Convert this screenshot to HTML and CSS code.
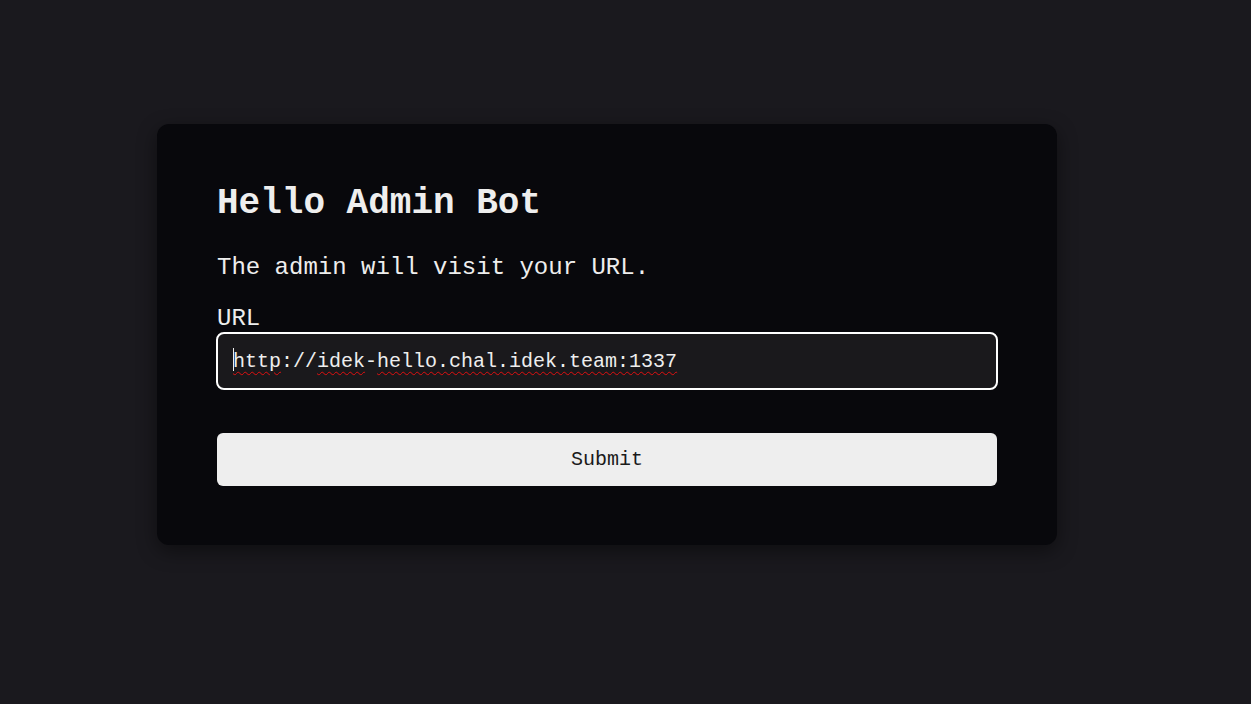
FILE: index.html
```html
<!DOCTYPE html>
<html>
<head>
<meta charset="utf-8">
<link rel="stylesheet" href="styles.css">
</head>
<body>
<main class="card">
  <h1 class="title">Hello Admin Bot</h1>
  <p class="lead">The admin will visit your URL.</p>
  <label class="label">URL</label>
  <div class="field"><span class="caret"></span><span class="sp">http</span>://<span class="sp">idek</span>-<span class="sp">hello.chal.idek.team:1337</span></div>
  <button class="submit">Submit</button>
</main>
</body>
</html>
```
FILE: styles.css
```css
html, body {
  margin: 0;
  height: 100%;
}
body {
  background: #1a191e;
  font-family: "Liberation Mono", monospace;
  color: #eeeeee;
  padding: 124px 0 0 157px;
  box-sizing: border-box;
}
.card {
  width: 900px;
  box-sizing: border-box;
  padding: 60px 60px 59px;
  background: #08080c;
  border-radius: 12px;
  box-shadow: 0 6px 20px rgba(0, 0, 0, 0.45);
  display: flex;
  flex-direction: column;
}
.title {
  margin: 0 0 30px;
  font-size: 36px;
  font-weight: bold;
  line-height: 40px;
}
.lead {
  margin: 0 0 25px;
  font-size: 24px;
  line-height: 28px;
}
.label {
  font-size: 24px;
  line-height: 24px;
}
.field {
  margin: 1px -1px 0;
  height: 58px;
  box-sizing: border-box;
  border: 2px solid #ffffff;
  border-radius: 8px;
  background: #1a191c;
  padding: 0 14px 0 15px;
  display: flex;
  align-items: center;
  font-size: 20px;
  white-space: pre;
  position: relative;
}
.sp {
  text-decoration: underline wavy #e01010;
  text-decoration-thickness: 1px;
  text-underline-offset: 4px;
}
.caret {
  position: absolute;
  left: 15px;
  top: 14px;
  width: 1px;
  height: 23px;
  background: #eeeeee;
}
.submit {
  margin-top: 43px;
  height: 53px;
  border: none;
  border-radius: 6px;
  background: #eeeeee;
  color: #1a1a1a;
  font-family: "Liberation Mono", monospace;
  font-size: 20px;
}
```
